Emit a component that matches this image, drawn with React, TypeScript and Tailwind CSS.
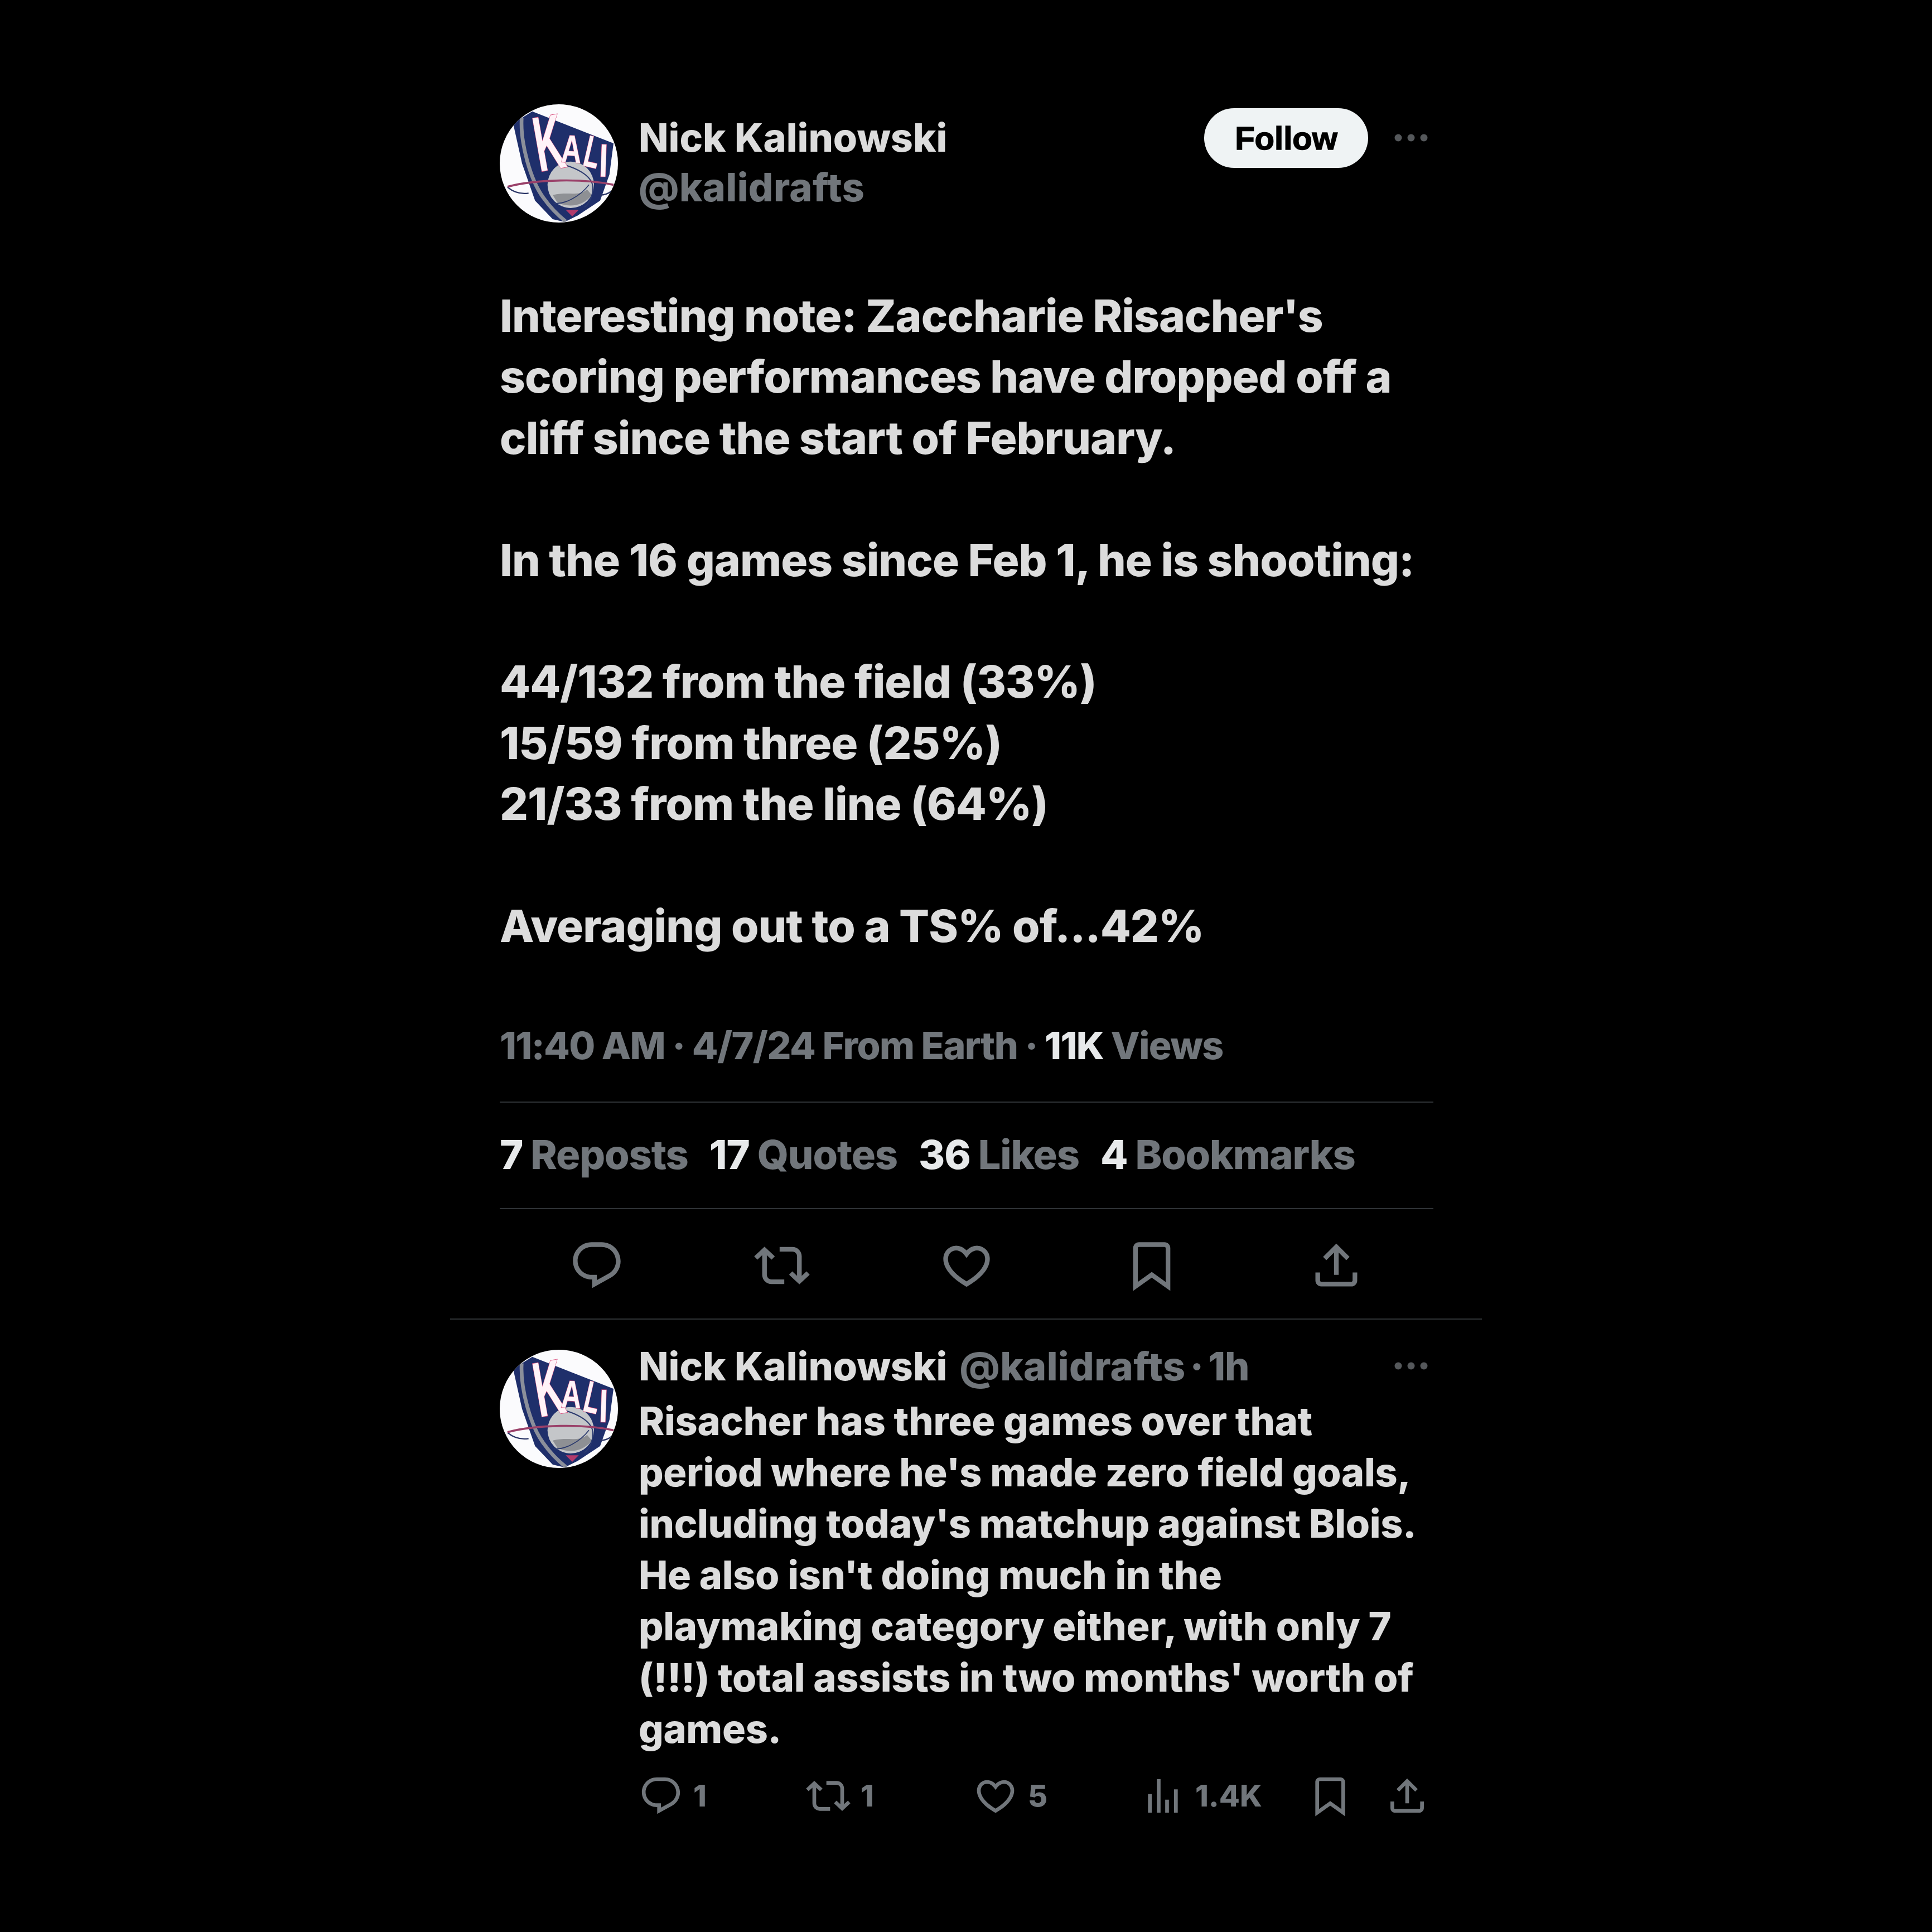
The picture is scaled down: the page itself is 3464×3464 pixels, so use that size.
import { ReactNode } from 'react';

const REPLY = 'M1.751 10c0-4.42 3.584-8 8.005-8h4.366c4.49 0 8.129 3.64 8.129 8.13 0 2.96-1.607 5.68-4.196 7.11l-8.054 4.46v-3.69h-.067c-4.49.1-8.183-3.51-8.183-8.01zm8.005-6c-3.317 0-6.005 2.69-6.005 6 0 3.37 2.77 6.08 6.138 6.01l.351-.01h1.761v2.3l5.087-2.81c1.951-1.08 3.163-3.13 3.163-5.36 0-3.39-2.744-6.13-6.129-6.13H9.756z';
const RETWEET = 'M4.5 3.88l4.432 4.14-1.364 1.46L5.5 7.55V16c0 1.1.896 2 2 2H13v2H7.5c-2.209 0-4-1.79-4-4V7.55L1.432 9.48.068 8.02 4.5 3.88zM16.5 6H11V4h5.5c2.209 0 4 1.79 4 4v8.45l2.068-1.93 1.364 1.46-4.432 4.14-4.432-4.14 1.364-1.46 2.068 1.93V8c0-1.1-.896-2-2-2z';
const LIKE = 'M16.697 5.5c-1.222-.06-2.679.51-3.89 2.16l-.805 1.09-.806-1.09C9.984 6.01 8.526 5.44 7.304 5.5c-1.243.07-2.349.78-2.91 1.91-.552 1.12-.633 2.78.479 4.82 1.074 1.97 3.257 4.27 7.129 6.61 3.87-2.34 6.052-4.64 7.126-6.61 1.111-2.04 1.03-3.7.477-4.82-.561-1.13-1.666-1.84-2.908-1.91zm4.187 7.69c-1.351 2.48-4.001 5.12-8.379 7.67l-.503.3-.504-.3c-4.379-2.55-7.029-5.19-8.382-7.67-1.36-2.5-1.41-4.86-.514-6.67.887-1.79 2.647-2.91 4.601-3.01 1.651-.09 3.368.56 4.798 2.01 1.429-1.45 3.146-2.1 4.796-2.01 1.954.1 3.714 1.22 4.601 3.01.896 1.81.846 4.17-.514 6.67z';
const BOOKMARK = 'M4 4.5C4 3.12 5.119 2 6.5 2h11C18.881 2 20 3.12 20 4.5v18.44l-8-5.71-8 5.71V4.5zM6.5 4c-.276 0-.5.22-.5.5v14.56l6-4.29 6 4.29V4.5c0-.28-.224-.5-.5-.5h-11z';
const SHARE = 'M12 2.59l5.7 5.7-1.41 1.42L13 6.41V16h-2V6.41l-3.3 3.3-1.41-1.42L12 2.59zM21 15l-.02 3.51c0 1.38-1.12 2.49-2.5 2.49H5.5C4.11 21 3 19.88 3 18.5V15h2v3.5c0 .28.22.5.5.5h12.98c.28 0 .5-.22.5-.5L19 15h2z';
const VIEWS = 'M8.75 21V3h2v18h-2zM18 21V8.5h2V21h-2zM4 21l.004-10h2L6 21H4zm9.248 0v-7h2v7h-2z';

const Icon = ({ d, className }: { d: string; className: string }) => (
  <svg viewBox="0 0 24 24" fill="currentColor" className={className}>
    <path d={d} />
  </svg>
);

const MoreDots = () => (
  <svg viewBox="0 0 60 14" className="w-[60px] h-[14px] shrink-0 text-[#55585b]" fill="currentColor">
    <ellipse cx="7" cy="7" rx="6.5" ry="6.5" />
    <ellipse cx="30" cy="7" rx="6.5" ry="6.5" />
    <ellipse cx="53" cy="7" rx="6.5" ry="6.5" />
  </svg>
);

// KALI basketball logo
const Avatar = () => (
  <svg viewBox="50 22 636 636" className="w-[212px] h-[212px] shrink-0 overflow-visible">
    <defs>
      <clipPath id="avatar-clip">
        <circle cx="368" cy="340" r="318" />
      </clipPath>
    </defs>
    <g clipPath="url(#avatar-clip)">
      <rect x="50" y="22" width="636" height="636" fill="#fbfbfd" />
      <path d="M122 125 L225 60 L662 232 L640 400 L590 540 L470 620 L400 655 L335 640 L240 540 L170 340 Z" fill="#1f2f6b" />
      <path d="M168 95 C160 230 215 430 285 525 C320 575 365 620 405 652" fill="none" stroke="#8b8f9a" strokeWidth="20" />
      <path d="M405 590 L475 590 L440 625 Z" fill="#b23a6b" />
      <circle cx="432" cy="455" r="125" fill="#c4c6c9" />
      <path d="M335 510 C420 490 470 520 520 480 L545 510 C500 570 420 580 360 550 Z" fill="#8e9094" />
      <path d="M385 345 C450 360 540 400 550 460 C555 510 530 560 505 575" fill="none" stroke="#2b3a6e" strokeWidth="6" />
      <path d="M340 555 C400 560 480 520 530 455" fill="none" stroke="#2b3a6e" strokeWidth="5" />
      <path d="M92 468 C130 500 170 505 205 500" fill="none" stroke="#2a3566" strokeWidth="7" />
      <path d="M590 510 C610 510 630 505 650 490" fill="none" stroke="#2a3566" strokeWidth="7" />
      <path d="M92 465 C250 425 500 420 662 455" fill="none" stroke="#9a4069" strokeWidth="11" />
    </g>
    <g fontFamily="'Liberation Sans', sans-serif" fontWeight="700" fill="#fff3f8" stroke="#d8527f" strokeWidth="4" paintOrder="stroke">
      <text transform="translate(262 385) rotate(-10) scale(0.72 1.4)" fontSize="300">K</text>
      <text transform="translate(378 332) rotate(3) scale(0.75 1.05)" fontSize="200">A</text>
      <text transform="translate(490 350) rotate(13) scale(0.68 1.2)" fontSize="200">L</text>
      <text transform="translate(582 410) rotate(2) scale(0.85 1.25)" fontSize="200">I</text>
    </g>
  </svg>
);

const Stat = ({ value, label }: { value: string; label: string }) => (
  <span className="flex gap-[14px]">
    <span className="text-[#e7e9ea]">{value}</span>
    <span className="text-[#71767b]">{label}</span>
  </span>
);

const ReplyAction = ({ d, count, className }: { d: string; count?: string; className: string }) => (
  <div className={`flex items-center ${className}`}>
    <Icon d={d} className="w-[80px] h-[80px] shrink-0" />
    {count && <span className="ml-[18px]">{count}</span>}
  </div>
);

const Line = ({ children }: { children?: ReactNode }) => (
  <div className="h-[109.4px]">{children}</div>
);

export default function App() {
  return (
    <div className="min-h-[3464px] bg-black flex justify-center font-['Inter',sans-serif] font-extrabold">
      <div className="w-[1850px] pt-[187px]">
        {/* Main tweet */}
        <div className="pl-[89px] pr-[87px]">
          <div className="flex">
            <Avatar />
            <div className="ml-[37px] flex-1 pt-[25px]">
              <div className="text-[70px] leading-[70px] text-[#dcdcdc]">Nick Kalinowski</div>
              <div className="mt-[19px] text-[70px] leading-[70px] tracking-[0.4px] text-[#71767b]">@kalidrafts</div>
            </div>
            <div className="flex items-center h-[120px] gap-[47px] pr-[10px]">
              <button className="w-[294px] h-[107px] rounded-full bg-[#eff3f4] text-black text-[58px] font-bold font-['Liberation_Sans',sans-serif] [-webkit-text-stroke:1.5px_#000]">Follow</button>
              <MoreDots />
            </div>
          </div>

          <div className="mt-[112px] text-[80px] leading-[109.4px] tracking-[-0.95px] text-[#dcdcdc]">
            <Line>Interesting note: Zaccharie Risacher's</Line>
            <Line>scoring performances have dropped off a</Line>
            <Line>cliff since the start of February.</Line>
            <Line />
            <Line>In the 16 games since Feb 1, he is shooting:</Line>
            <Line />
            <Line>44/132 from the field (33%)</Line>
            <Line>15/59 from three (25%)</Line>
            <Line>21/33 from the line (64%)</Line>
            <Line />
            <Line>Averaging out to a TS% of...42%</Line>
          </div>

          <div className="mt-[120px] flex text-[68px] leading-[80px] tracking-[-1.65px] text-[#71767b]">
            <span>11:40 AM · 4/7/24 From Earth ·&nbsp;</span>
            <span className="text-[#e7e9ea]">11K</span>
            <span>&nbsp;Views</span>
          </div>

          <div className="mt-[61px] h-[193px] pb-[3px] border-y-2 border-[#2f3336] flex items-center gap-[38px] text-[72px] tracking-[-1.1px]">
            <Stat value="7" label="Reposts" />
            <Stat value="17" label="Quotes" />
            <Stat value="36" label="Likes" />
            <Stat value="4" label="Bookmarks" />
          </div>

          <div className="h-[196px] pt-[6px] flex items-center justify-between px-[124px] text-[#71767b]">
            <Icon d={REPLY} className="w-[100px] h-[100px]" />
            <Icon d={RETWEET} className="w-[100px] h-[100px]" />
            <Icon d={LIKE} className="w-[100px] h-[100px]" />
            <Icon d={BOOKMARK} className="w-[100px] h-[100px]" />
            <Icon d={SHARE} className="w-[100px] h-[100px]" />
          </div>
        </div>

        <div className="h-[2px] bg-[#2f3336]" />

        {/* Reply */}
        <div className="flex pl-[89px] pr-[87px] pt-[54px]">
          <Avatar />
          <div className="ml-[37px] flex-1 min-w-0">
            <div className="-mt-[6px] flex items-center h-[70px] text-[70px]">
              <span className="text-[#dcdcdc]">Nick Kalinowski</span>
              <span className="ml-[22px] text-[#71767b] tracking-[0.4px]">@kalidrafts</span>
              <span className="ml-[8px] text-[#71767b]">·</span>
              <span className="ml-[8px] text-[#71767b] tracking-[-1px]">1h</span>
              <span className="ml-auto pr-[10px]">
                <MoreDots />
              </span>
            </div>
            <div className="mt-[18px] text-[70px] leading-[92px] tracking-[-0.3px] text-[#dcdcdc]">
              <div>Risacher has three games over that</div>
              <div>period where he's made zero field goals,</div>
              <div>including today's matchup against Blois.</div>
              <div>He also isn't doing much in the</div>
              <div>playmaking category either, with only 7</div>
              <div>(!!!) total assists in two months' worth of</div>
              <div>games.</div>
            </div>
            <div className="mt-[33px] flex text-[54px] text-[#71767b]">
              <ReplyAction d={REPLY} count="1" className="w-[300px]" />
              <ReplyAction d={RETWEET} count="1" className="w-[300px]" />
              <ReplyAction d={LIKE} count="5" className="w-[300px]" />
              <ReplyAction d={VIEWS} count="1.4K" className="w-[300px]" />
              <ReplyAction d={BOOKMARK} className="w-[138px]" />
              <ReplyAction d={SHARE} className="w-[80px]" />
            </div>
          </div>
        </div>
      </div>
    </div>
  );
}
